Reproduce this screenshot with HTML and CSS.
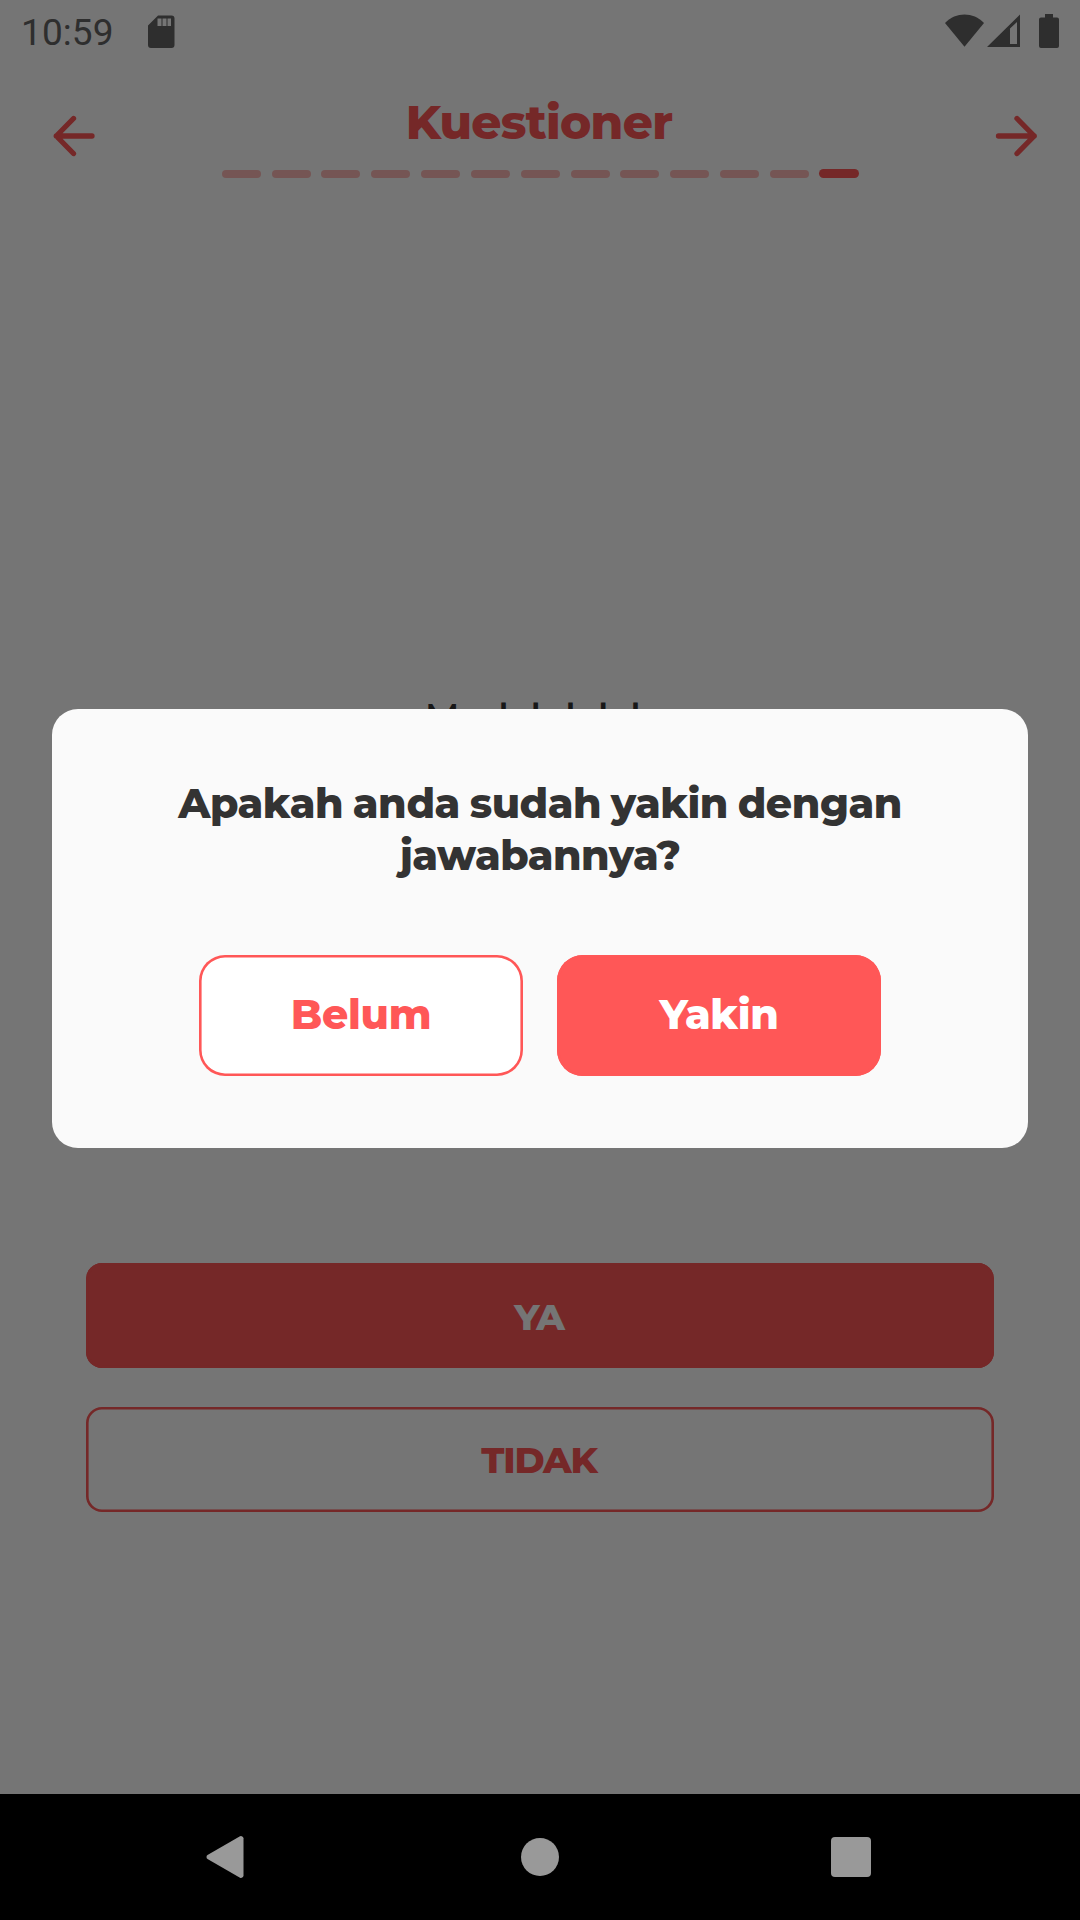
FILE: index.html
```
<!DOCTYPE html>
<html lang="id">
<head>
<meta charset="utf-8">
<title>Kuestioner</title>
<link rel="stylesheet" href="styles.css">
</head>
<body>
<div class="phone">
  <div class="app">
    <div class="status">
      <span class="clock">10:59</span>
      <svg class="sd" viewBox="0 0 27 34"><path fill-rule="evenodd" d="M10 .5H23.500a3 3 0 0 1 3 3V30a3 3 0 0 1-3 3H3a3 3 0 0 1-3-3V10.500zM9.500 3.500V11h4V3.500zM14.500 3.500V11h4V3.500zM19.500 3.500V11h3.500V3.500z"/></svg>
      <svg class="system" viewBox="0 0 115 36">
        <path d="M0 9C11-2.300 28-2.300 39 9L19.500 32.800z"/>
        <path fill-rule="evenodd" d="M42 33 75 .5V33zM65 14.500V30h7V8z"/>
        <path d="M100 0h8v3.500h4a2 2 0 0 1 2 2V32a2 2 0 0 1-2 2H96a2 2 0 0 1-2-2V5.500a2 2 0 0 1 2-2h4z"/>
      </svg>
    </div>
    <header class="header">
      <svg class="arrow" viewBox="0 0 42 42"><path d="M20.500 3.500 3.300 21 20.500 38.500M3.300 21H39"/></svg>
      <div class="heading">
        <h1 class="title">Kuestioner</h1>
        <div class="steps">
          <i class="step"></i><i class="step"></i><i class="step"></i><i class="step"></i><i class="step"></i><i class="step"></i><i class="step"></i><i class="step"></i><i class="step"></i><i class="step"></i><i class="step"></i><i class="step"></i><i class="step step-active"></i>
        </div>
      </div>
      <svg class="arrow" viewBox="0 0 42 42"><path d="M22 3.500 39.200 21 22 38.500M39.200 21H3.500"/></svg>
    </header>
    <main class="question">Mudah lelah</main>
    <div class="answers">
      <button class="answer answer-yes">YA</button>
      <button class="answer">TIDAK</button>
    </div>
    <div class="scrim">
      <section class="dialog">
        <h2 class="prompt">Apakah anda sudah yakin dengan jawabannya?</h2>
        <div class="actions">
          <button class="action action-no">Belum</button>
          <button class="action action-sure">Yakin</button>
        </div>
      </section>
    </div>
  </div>
  <nav class="nav">
    <svg class="key" viewBox="0 0 44 44"><path d="M36 1.300a2.500 2.500 0 0 1 3.500 2V40.700a2.500 2.500 0 0 1-3.500 2L3.500 24a2.500 2.500 0 0 1 0-4z"/></svg>
    <svg class="key key-home" viewBox="0 0 44 44"><circle cx="22" cy="22" r="19"/></svg>
    <svg class="key" viewBox="0 0 44 44"><rect x="2" y="2" width="40" height="40" rx="4"/></svg>
  </nav>
</div>
</body>
</html>
```
FILE: styles.css
```
* { box-sizing: border-box; }
body { margin: 0; }
h1, h2 { margin: 0; }
button { padding: 0; }

.phone {
  width: 1080px;
  height: 1920px;
  display: flex;
  flex-direction: column;
  overflow: hidden;
  font-family: Montserrat, Inter, sans-serif;
}
.app {
  position: relative;
  height: 1794px;
  display: flex;
  flex-direction: column;
  background: #fff;
}

.status {
  height: 63px;
  display: flex;
  align-items: flex-start;
  padding: 0 20px 0 21px;
  fill: #646464;
}
.clock {
  width: 127px;
  padding-top: 12px;
  font: 37px/42px Roboto, sans-serif;
  letter-spacing: .1px;
  color: #646464;
}
.sd { width: 27px; height: 34px; margin-top: 15px; }
.system { width: 115px; height: 36px; margin: 14px 0 0 auto; }

.header {
  height: 137px;
  display: flex;
  justify-content: space-between;
  padding: 0 43px 0 53px;
}
.arrow {
  width: 42px;
  height: 42px;
  margin-top: 52px;
  fill: none;
  stroke: #ff5757;
  stroke-width: 5.300;
  stroke-linecap: round;
  stroke-linejoin: round;
}
.heading {
  display: flex;
  flex-direction: column;
  align-items: center;
  margin-right: 9px;
}
.title {
  padding: 30px 3px 0 0;
  font-size: 47px;
  line-height: 60px;
  font-weight: 800;
  letter-spacing: -.750px;
  color: #ff5757;
}
.steps { display: flex; align-items: center; gap: 10.850px; margin-top: 16px; }
.step { width: 39px; height: 8px; border-radius: 4px; background: #ffb9b7; }
.step-active { width: 40px; height: 9px; border-radius: 5px; margin-left: -.5px; background: #ff5757; }

.question {
  height: 1063px;
  padding-top: 492px;
  text-align: center;
  font-size: 36px;
  line-height: 50px;
  font-weight: 600;
  color: #333;
}
.answers {
  display: flex;
  flex-direction: column;
  gap: 38.500px;
  padding: 0 86px;
}
.answer {
  height: 105px;
  padding: 2px 2px 0 0;
  border: 0;
  border-radius: 16px;
  background: #fff;
  box-shadow: inset 0 0 0 2.600px #ff5757;
  font: 800 36.500px/46px Montserrat, Inter, sans-serif;
  letter-spacing: -1.200px;
  color: #ff5757;
}
.answer-yes { background: #ff5757; color: #fff; }

.scrim {
  position: absolute;
  inset: 0;
  padding: 709px 52px 0;
  background: rgba(0, 0, 0, .54);
}
.dialog {
  height: 439px;
  padding: 68px 100px 0;
  border-radius: 26px;
  background: #fafafa;
}
.prompt {
  height: 178px;
  text-align: center;
  font-size: 41px;
  line-height: 52px;
  font-weight: 800;
  letter-spacing: -.5px;
  word-spacing: -1.500px;
  color: #333;
}
.actions { display: flex; justify-content: center; gap: 34px; }
.action {
  width: 324px;
  height: 121px;
  padding-bottom: 3px;
  border: 0;
  border-radius: 26px;
  box-shadow: inset 0 0 0 2.600px #ff5757;
  font: 800 41px/52px Montserrat, Inter, sans-serif;
  letter-spacing: -.300px;
}
.action-no { background: #fff; color: #ff5757; }
.action-sure { background: #ff5757; color: #fff; }

.nav {
  height: 126px;
  display: flex;
  justify-content: space-between;
  align-items: center;
  padding: 0 207px 0 204px;
  background: #000;
}
.key { width: 44px; height: 44px; fill: #999; }
.key-home { margin-left: 3px; }
```
